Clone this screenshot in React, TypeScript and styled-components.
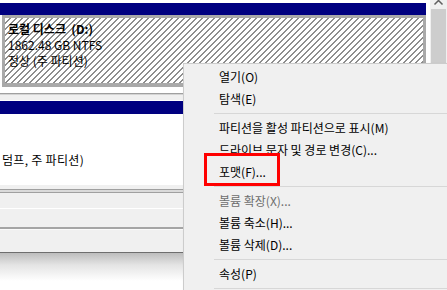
import React from 'react';
import styled, { createGlobalStyle } from 'styled-components';

const GlobalStyle = createGlobalStyle`
  *, *::before, *::after { box-sizing: border-box; }
  html, body { margin: 0; padding: 0; background: #fff; }
  body {
    font-family: "Noto Sans CJK KR", "Noto Sans", sans-serif;
    font-size: 12px;
    color: #000;
  }
`;

const Screen = styled.div`
  position: relative;
  width: 447px;
  height: 290px;
  overflow: hidden;
  display: flex;
  background: #fff;
`;

// 디스크 그래픽 영역
const DiskPane = styled.div`
  flex: 1;
  display: flex;
  flex-direction: column;
  padding-top: 3px;
  min-width: 0;
`;

const PartitionBar = styled.div<{ $h: number; $inset?: number }>`
  height: ${p => p.$h}px;
  margin-right: ${p => p.$inset ?? 0}px;
  background: #000080;
`;

const SelectedVolume = styled.div`
  height: 72px;
  margin: 0 4px 0 2px;
  border: 3px solid #a9a9a9;
  border-bottom-width: 4px;
  padding: 3px 0 0 3px;
  background: repeating-linear-gradient(
    135deg,
    #ffffff 0,
    #ffffff 3.3px,
    #8e8e8e 3.3px,
    #8e8e8e 4.243px
  );
`;

const VolumeLine = styled.div<{ $bold?: boolean }>`
  line-height: 16px;
  height: 16px;
  white-space: pre;
  font-weight: ${p => (p.$bold ? 700 : 400)};
`;

const DiskGap = styled.div`
  margin-top: 6px;
  height: 8px;
  background: #f0f0f0;
  border-top: 1px solid #a0a0a0;
  border-bottom: 1px solid #ffffff;
  box-shadow: inset 0 1px 0 #d4d4d4;
`;

const PlainVolume = styled.div`
  height: 71px;
  padding-top: 38px;
  background: #fff;
`;

// 왼쪽으로 스크롤되어 잘린 상태 텍스트
const ClippedLine = styled.div`
  width: 84px;
  height: 16px;
  line-height: 16px;
  display: flex;
  justify-content: flex-end;
  overflow: hidden;
  white-space: nowrap;
  letter-spacing: 0.3px;
`;

const DiskList = styled.div`
  height: 67px;
  padding-top: 4px;
  background: #f0f0f0;
`;

const ListRule = styled.div<{ $color: string; $h?: number; $top?: number }>`
  height: ${p => p.$h ?? 1}px;
  margin-top: ${p => p.$top ?? 0}px;
  background: ${p => p.$color};
`;

const PaneShadow = styled.div`
  flex: 1;
  border-top: 1px solid #6e6e6e;
  background: linear-gradient(#bdbdbd, #e4e4e4 12px, #ffffff 28px);
`;

// 세로 스크롤바
const ScrollBar = styled.div`
  width: 17px;
  display: flex;
  flex-direction: column;
  background: #f0f0f0;
`;

const ArrowCap = styled.div`
  height: 9px;
  display: flex;
  justify-content: center;
`;

const Thumb = styled.div`
  flex: 1;
  margin: 0 1px;
  background: #cdcdcd;
`;

// 컨텍스트 메뉴
const ContextMenu = styled.div`
  position: absolute;
  left: 183px;
  top: 63px;
  width: 290px;
  padding: 2px 0;
  background: #f0f0f0;
  border: 1px solid #cccccc;
  box-shadow: 2px 2px 3px rgba(0, 0, 0, 0.2);
`;

const MenuItem = styled.div<{ $disabled?: boolean }>`
  position: relative;
  height: 22px;
  line-height: 22px;
  padding-left: 35px;
  white-space: nowrap;
  color: ${p => (p.$disabled ? '#6d6d6d' : '#000')};
`;

const MenuSeparator = styled.div`
  height: 7px;
  margin-left: 30px;
  display: flex;
  align-items: center;

  &::after {
    content: '';
    flex: 1;
    height: 1px;
    background: #d7d7d7;
  }
`;

const Highlight = styled.div`
  position: absolute;
  left: 20px;
  top: -8px;
  width: 76px;
  height: 33px;
  border: 3px solid #ff0000;
  pointer-events: none;
`;

type Entry =
  | { kind: 'item'; label: string; disabled?: boolean; marked?: boolean }
  | { kind: 'sep' };

const menuEntries: Entry[] = [
  { kind: 'item', label: '열기(O)' },
  { kind: 'item', label: '탐색(E)' },
  { kind: 'sep' },
  { kind: 'item', label: '파티션을 활성 파티션으로 표시(M)' },
  { kind: 'item', label: '드라이브 문자 및 경로 변경(C)...' },
  { kind: 'item', label: '포맷(F)...', marked: true },
  { kind: 'sep' },
  { kind: 'item', label: '볼륨 확장(X)...', disabled: true },
  { kind: 'item', label: '볼륨 축소(H)...' },
  { kind: 'item', label: '볼륨 삭제(D)...' },
  { kind: 'sep' },
  { kind: 'item', label: '속성(P)' },
  { kind: 'sep' },
];

export default function App() {
  return (
    <>
      <GlobalStyle />
      <Screen>
        <DiskPane>
          <PartitionBar $h={12} $inset={4} />
          <SelectedVolume>
            <VolumeLine $bold>{'로컬 디스크  (D:)'}</VolumeLine>
            <VolumeLine>1862.48 GB NTFS</VolumeLine>
            <VolumeLine>정상 (주 파티션)</VolumeLine>
          </SelectedVolume>

          <DiskGap />
          <PartitionBar $h={13} />
          <PlainVolume>
            <ClippedLine>
              <span>정상 (부팅, 페이지 파일, 크래시 덤프, 주 파티션)</span>
            </ClippedLine>
          </PlainVolume>

          <DiskList>
            <ListRule $color="#a0a0a0" />
            <ListRule $color="#dadada" $h={2} />
            <ListRule $color="#a0a0a0" />
            <ListRule $color="#ffffff" $top={15} />
            <ListRule $color="#a5a5a5" $h={2} $top={18} />
            <ListRule $color="#fafafa" />
          </DiskList>
          <PaneShadow />
        </DiskPane>

        <ScrollBar>
          <ArrowCap>
            <svg width="17" height="9" viewBox="0 0 17 9">
              <polyline
                points="4.5,4.5 8.5,0.5 12.5,4.5"
                fill="none"
                stroke="#606060"
                strokeWidth="1.5"
              />
            </svg>
          </ArrowCap>
          <Thumb />
        </ScrollBar>

        <ContextMenu>
          {menuEntries.map((entry, i) =>
            entry.kind === 'sep' ? (
              <MenuSeparator key={i} />
            ) : (
              <MenuItem key={i} $disabled={entry.disabled}>
                {entry.label}
                {entry.marked && <Highlight />}
              </MenuItem>
            )
          )}
        </ContextMenu>
      </Screen>
    </>
  );
}
